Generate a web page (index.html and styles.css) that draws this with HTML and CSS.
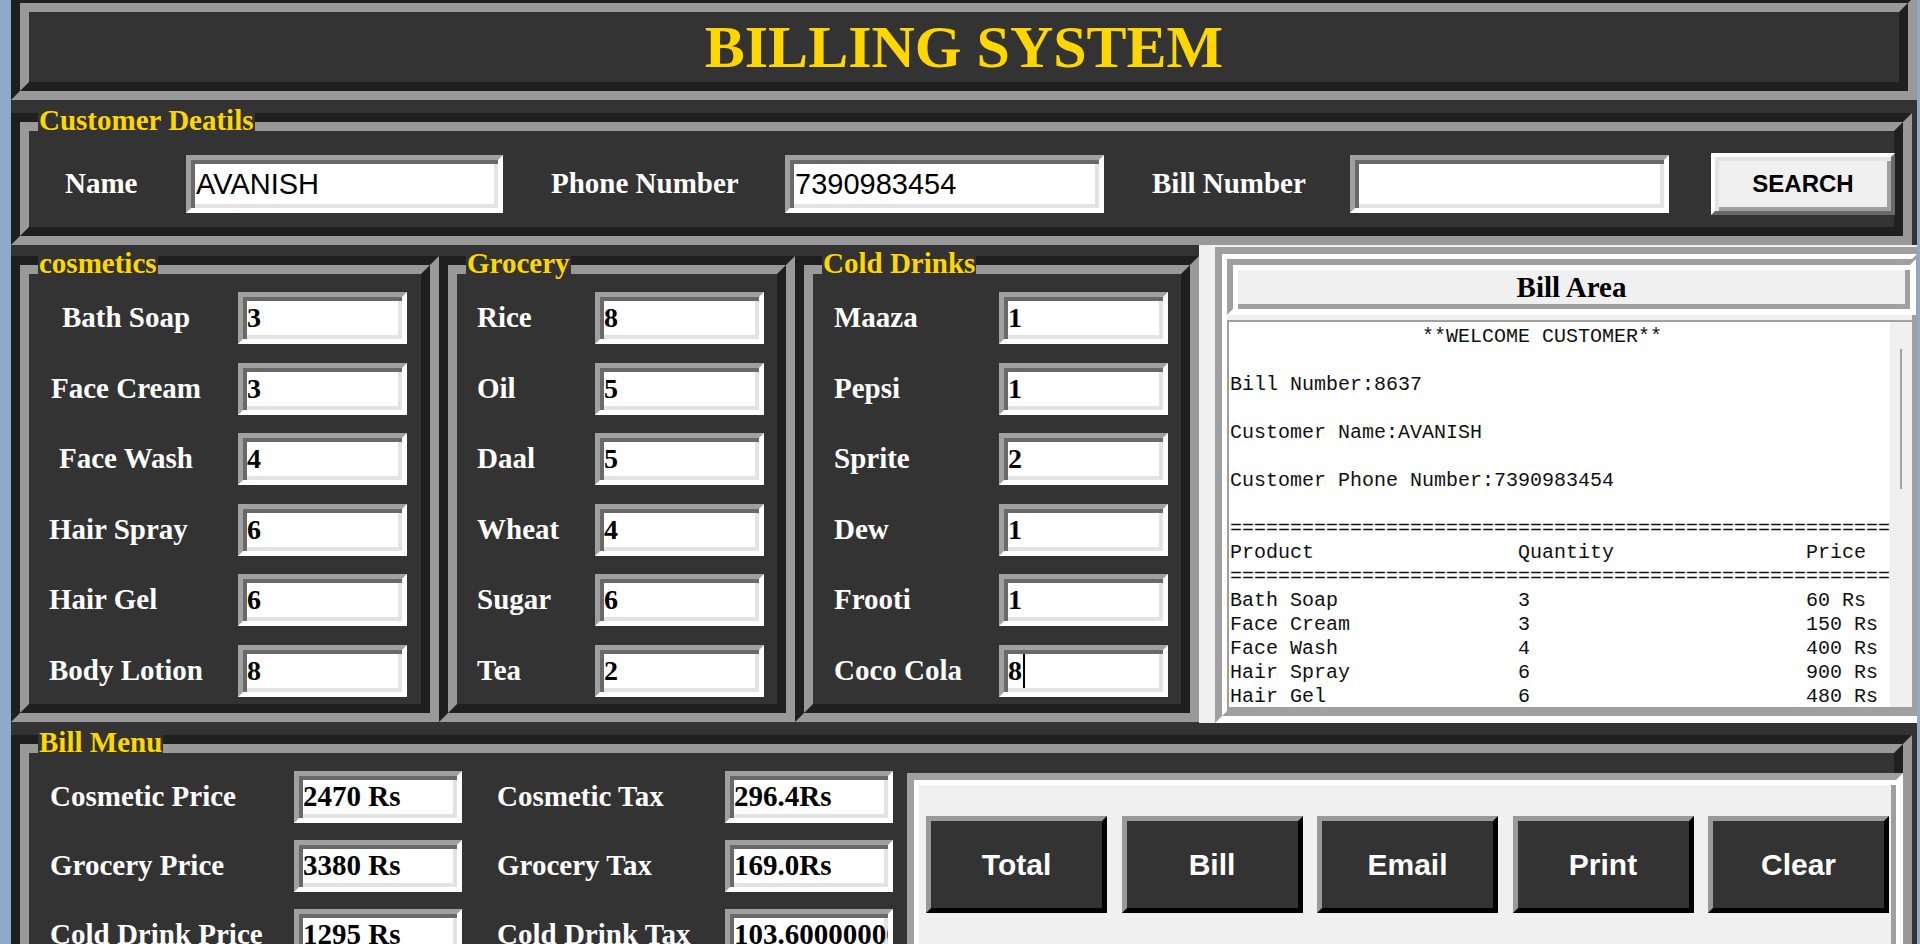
FILE: index.html
```html
<!DOCTYPE html>
<html>
<head>
<meta charset="utf-8">
<title>Billing System</title>
<link rel="stylesheet" href="styles.css">
</head>
<body>
<div class="app">
  <header class="groove title-frame">
    <div class="groove-in title-in"><h1 class="title">BILLING SYSTEM</h1></div>
  </header>

  <section class="groove cust-frame">
    <span class="legend">Customer Deatils</span>
    <div class="groove-in cust-in">
      <span class="lbl">Name</span>
      <div class="entry cust-entry">AVANISH</div>
      <span class="lbl">Phone Number</span>
      <div class="entry cust-entry">7390983454</div>
      <span class="lbl">Bill Number</span>
      <div class="entry cust-entry"></div>
      <button class="search">SEARCH</button>
    </div>
  </section>

  <div class="products">
    <section class="groove pframe cos">
      <span class="legend">cosmetics</span>
      <div class="groove-in pgrid cos-grid">
        <span class="lbl c">Bath Soap</span><div class="entry q">3</div>
        <span class="lbl c">Face Cream</span><div class="entry q">3</div>
        <span class="lbl c">Face Wash</span><div class="entry q">4</div>
        <span class="lbl">Hair Spray</span><div class="entry q">6</div>
        <span class="lbl">Hair Gel</span><div class="entry q">6</div>
        <span class="lbl c">Body Lotion</span><div class="entry q">8</div>
      </div>
    </section>
    <section class="groove pframe gro">
      <span class="legend">Grocery</span>
      <div class="groove-in pgrid gro-grid">
        <span class="lbl">Rice</span><div class="entry q">8</div>
        <span class="lbl">Oil</span><div class="entry q">5</div>
        <span class="lbl">Daal</span><div class="entry q">5</div>
        <span class="lbl">Wheat</span><div class="entry q">4</div>
        <span class="lbl">Sugar</span><div class="entry q">6</div>
        <span class="lbl">Tea</span><div class="entry q">2</div>
      </div>
    </section>
    <section class="groove pframe cold">
      <span class="legend">Cold Drinks</span>
      <div class="groove-in pgrid cold-grid">
        <span class="lbl">Maaza</span><div class="entry q">1</div>
        <span class="lbl">Pepsi</span><div class="entry q">1</div>
        <span class="lbl">Sprite</span><div class="entry q">2</div>
        <span class="lbl">Dew</span><div class="entry q">1</div>
        <span class="lbl">Frooti</span><div class="entry q">1</div>
        <span class="lbl">Coco Cola</span><div class="entry q">8<span class="caret"></span></div>
      </div>
    </section>
    <section class="billarea">
      <div class="bgroove">
        <div class="bgroove-in">
          <div class="billlabel">Bill Area</div>
          <div class="billbox">
<pre class="billtext">                **WELCOME CUSTOMER**

Bill Number:8637

Customer Name:AVANISH

Customer Phone Number:7390983454

=======================================================
Product                 Quantity                Price
=======================================================
Bath Soap               3                       60 Rs
Face Cream              3                       150 Rs
Face Wash               4                       400 Rs
Hair Spray              6                       900 Rs
Hair Gel                6                       480 Rs
Body Lotion             8                       480 Rs
Rice                    8                       640 Rs</pre>
            <div class="scroll"><div class="thumb"></div></div>
          </div>
        </div>
      </div>
    </section>
  </div>

  <section class="groove menu-frame">
    <span class="legend">Bill Menu</span>
    <div class="groove-in menu-in">
      <div class="menu-grid">
        <span class="lbl">Cosmetic Price</span><div class="entry m">2470 Rs</div>
        <span class="lbl">Cosmetic Tax</span><div class="entry m">296.4Rs</div>
        <span class="lbl">Grocery Price</span><div class="entry m">3380 Rs</div>
        <span class="lbl">Grocery Tax</span><div class="entry m">169.0Rs</div>
        <span class="lbl">Cold Drink Price</span><div class="entry m">1295 Rs</div>
        <span class="lbl">Cold Drink Tax</span><div class="entry m">103.60000000000001Rs</div>
      </div>
      <div class="btnpanel">
        <button class="act">Total</button>
        <button class="act">Bill</button>
        <button class="act">Email</button>
        <button class="act">Print</button>
        <button class="act">Clear</button>
      </div>
    </div>
  </section>
</div>
</body>
</html>
```

FILE: styles.css
```css
* { box-sizing: border-box; margin: 0; padding: 0; }
html, body { height: 100%; }
body {
  background: #8eaacb;
  overflow: hidden;
  padding-left: 11px;
  font-family: "Liberation Serif", "Times New Roman", serif;
}
.app {
  width: 1906px;
  height: 944px;
  background: #333333;
  overflow: hidden;
  display: flex;
  flex-direction: column;
}

/* Tk groove relief on dark bg */
.groove {
  position: relative;
  flex: none;
  border: 9px solid;
  border-color: #1f1f1f #999999 #999999 #1f1f1f;
  background: #333333;
}
.groove-in {
  height: 100%;
  border: 9px solid;
  border-color: #999999 #1f1f1f #1f1f1f #999999;
}
.legend {
  position: absolute;
  top: -16px;
  left: 18px;
  z-index: 1;
  padding: 0 1px;
  background: #333333;
  color: #ffd700;
  font: bold 29px/29px "Liberation Serif", serif;
  white-space: nowrap;
}
.lbl {
  color: #ffffff;
  font: bold 29px/1.1 "Liberation Serif", serif;
  white-space: nowrap;
}
.lbl.c { text-align: center; }

/* Title */
.title-frame { margin-top: -6px; height: 106px; width: 1906px; }
.title-in { display: flex; align-items: center; justify-content: center; }
.title {
  color: #ffd700;
  font: bold 60px/1 "Liberation Serif", serif;
}

/* Tk entry (sunken) */
.entry {
  background: #ffffff;
  border: 5px solid;
  border-color: #a0a0a0 #ffffff #ffffff #a0a0a0;
  box-shadow: inset 4px 4px 0 #696969, inset -4px -4px 0 #e3e3e3;
  display: flex;
  align-items: center;
  padding-left: 4px;
  color: #000000;
  white-space: nowrap;
  overflow: hidden;
}

/* Customer */
.cust-frame { margin-top: 13px; width: 1901px; height: 132px; }
.cust-in {
  display: grid;
  grid-template-columns: 73px 317px 186px 319px 150px 319px 178px;
  column-gap: 48px;
  align-items: center;
  align-content: start;
  padding: 22px 0 0 36px;
}
.cust-in .lbl { font-size: 29px; }
.cust-entry {
  height: 58px;
  padding-left: 5px;
  font: 29px/1 "Liberation Sans", Arial, sans-serif;
}
.search {
  margin-left: -6px;
  height: 62px;
  background: #f0f0f0;
  border: 4px solid;
  border-color: #ffffff #696969 #696969 #ffffff;
  box-shadow: inset 4px 4px 0 #e3e3e3, inset -4px -4px 0 #a0a0a0;
  font: bold 24px/1 "Liberation Sans", Arial, sans-serif;
  color: #000000;
}

/* Product frames */
.products { display: flex; height: 478px; flex: none; }
.pframe { margin-top: 11px; height: 466px; }
.cos { width: 428px; }
.gro { width: 356px; }
.cold { width: 404px; }
.pgrid {
  display: grid;
  grid-auto-rows: 52px;
  row-gap: 18.6px;
  column-gap: 35px;
  align-items: center;
  align-content: start;
  padding-top: 18px;
}
.cos-grid { grid-template-columns: 154px 169px; padding-left: 20px; }
.gro-grid { grid-template-columns: 83px 169px; padding-left: 20px; }
.cold-grid { grid-template-columns: 130px 169px; padding-left: 21px; }
.entry.q {
  height: 52px;
  font: bold 28px/1 "Liberation Serif", serif;
}
.caret {
  display: inline-block;
  width: 2px;
  height: 34px;
  background: #000000;
  margin-left: 1px;
}

/* Bill area */
.billarea {
  flex: none;
  width: 725px;
  height: 478px;
  background: #f0f0f0;
  padding: 2px 0 0 16px;
}
.bgroove {
  height: 476px;
  border: 7px solid;
  border-color: #a0a0a0 #ffffff #ffffff #a0a0a0;
}
.bgroove-in {
  height: 100%;
  border: 5px solid;
  border-color: #ffffff #a0a0a0 #a0a0a0 #ffffff;
  display: flex;
  flex-direction: column;
}
.billlabel {
  height: 56px;
  flex: none;
  margin-right: -4px;
  border: 6px solid;
  border-color: #a0a0a0 #ffffff #ffffff #a0a0a0;
  box-shadow: inset 5px 5px 0 #ffffff, inset -5px -5px 0 #a0a0a0;
  background: #f0f0f0;
  display: flex;
  align-items: center;
  justify-content: center;
  color: #000000;
  font: bold 29px/1 "Liberation Serif", serif;
}
.billbox {
  margin-top: 5px;
  flex: 1;
  min-height: 0;
  display: flex;
  background: #ffffff;
  border-top: 2px solid #a0a0a0;
  border-left: 2px solid #a0a0a0;
  border-bottom: 4px solid #a0a0a0;
}
.billtext {
  flex: 1;
  overflow: hidden;
  padding: 3px 0 0 1px;
  font: 20px/24px "Liberation Mono", "Courier New", monospace;
  color: #111111;
  white-space: pre;
}
.scroll {
  flex: none;
  width: 22px;
  background: #f0f0f0;
}
.thumb {
  margin: 27px 0 0 10px;
  width: 2px;
  height: 140px;
  background: #a0a0a0;
}

/* Bill menu */
.menu-frame { margin-top: 12px; width: 1901px; height: 260px; }
.menu-in {
  display: flex;
  align-items: flex-start;
  padding: 18px 0 0 21px;
}
.menu-grid {
  flex: none;
  display: grid;
  grid-template-columns: 209px 168px 193px 168px;
  grid-auto-rows: 51.5px;
  column-gap: 35px;
  row-gap: 17.5px;
  align-items: center;
}
.entry.m {
  height: 51.5px;
  font: bold 29px/1 "Liberation Serif", serif;
}
.btnpanel {
  flex: none;
  margin: 2px 0 0 14px;
  width: 996px;
  height: 220px;
  background: #f0f0f0;
  border: 7px solid;
  border-color: #a0a0a0 #ffffff #ffffff #a0a0a0;
  box-shadow: inset 5px 5px 0 #ffffff, inset -5px -5px 0 #a0a0a0;
  display: flex;
  align-items: flex-start;
  gap: 14.5px;
  padding: 36px 0 0 12px;
}
.act {
  width: 181px;
  height: 97px;
  background: #333333;
  border: 5px solid;
  border-color: #999999 #000000 #000000 #999999;
  color: #ffffff;
  font: bold 30px/1 "Liberation Sans", Arial, sans-serif;
}
```
